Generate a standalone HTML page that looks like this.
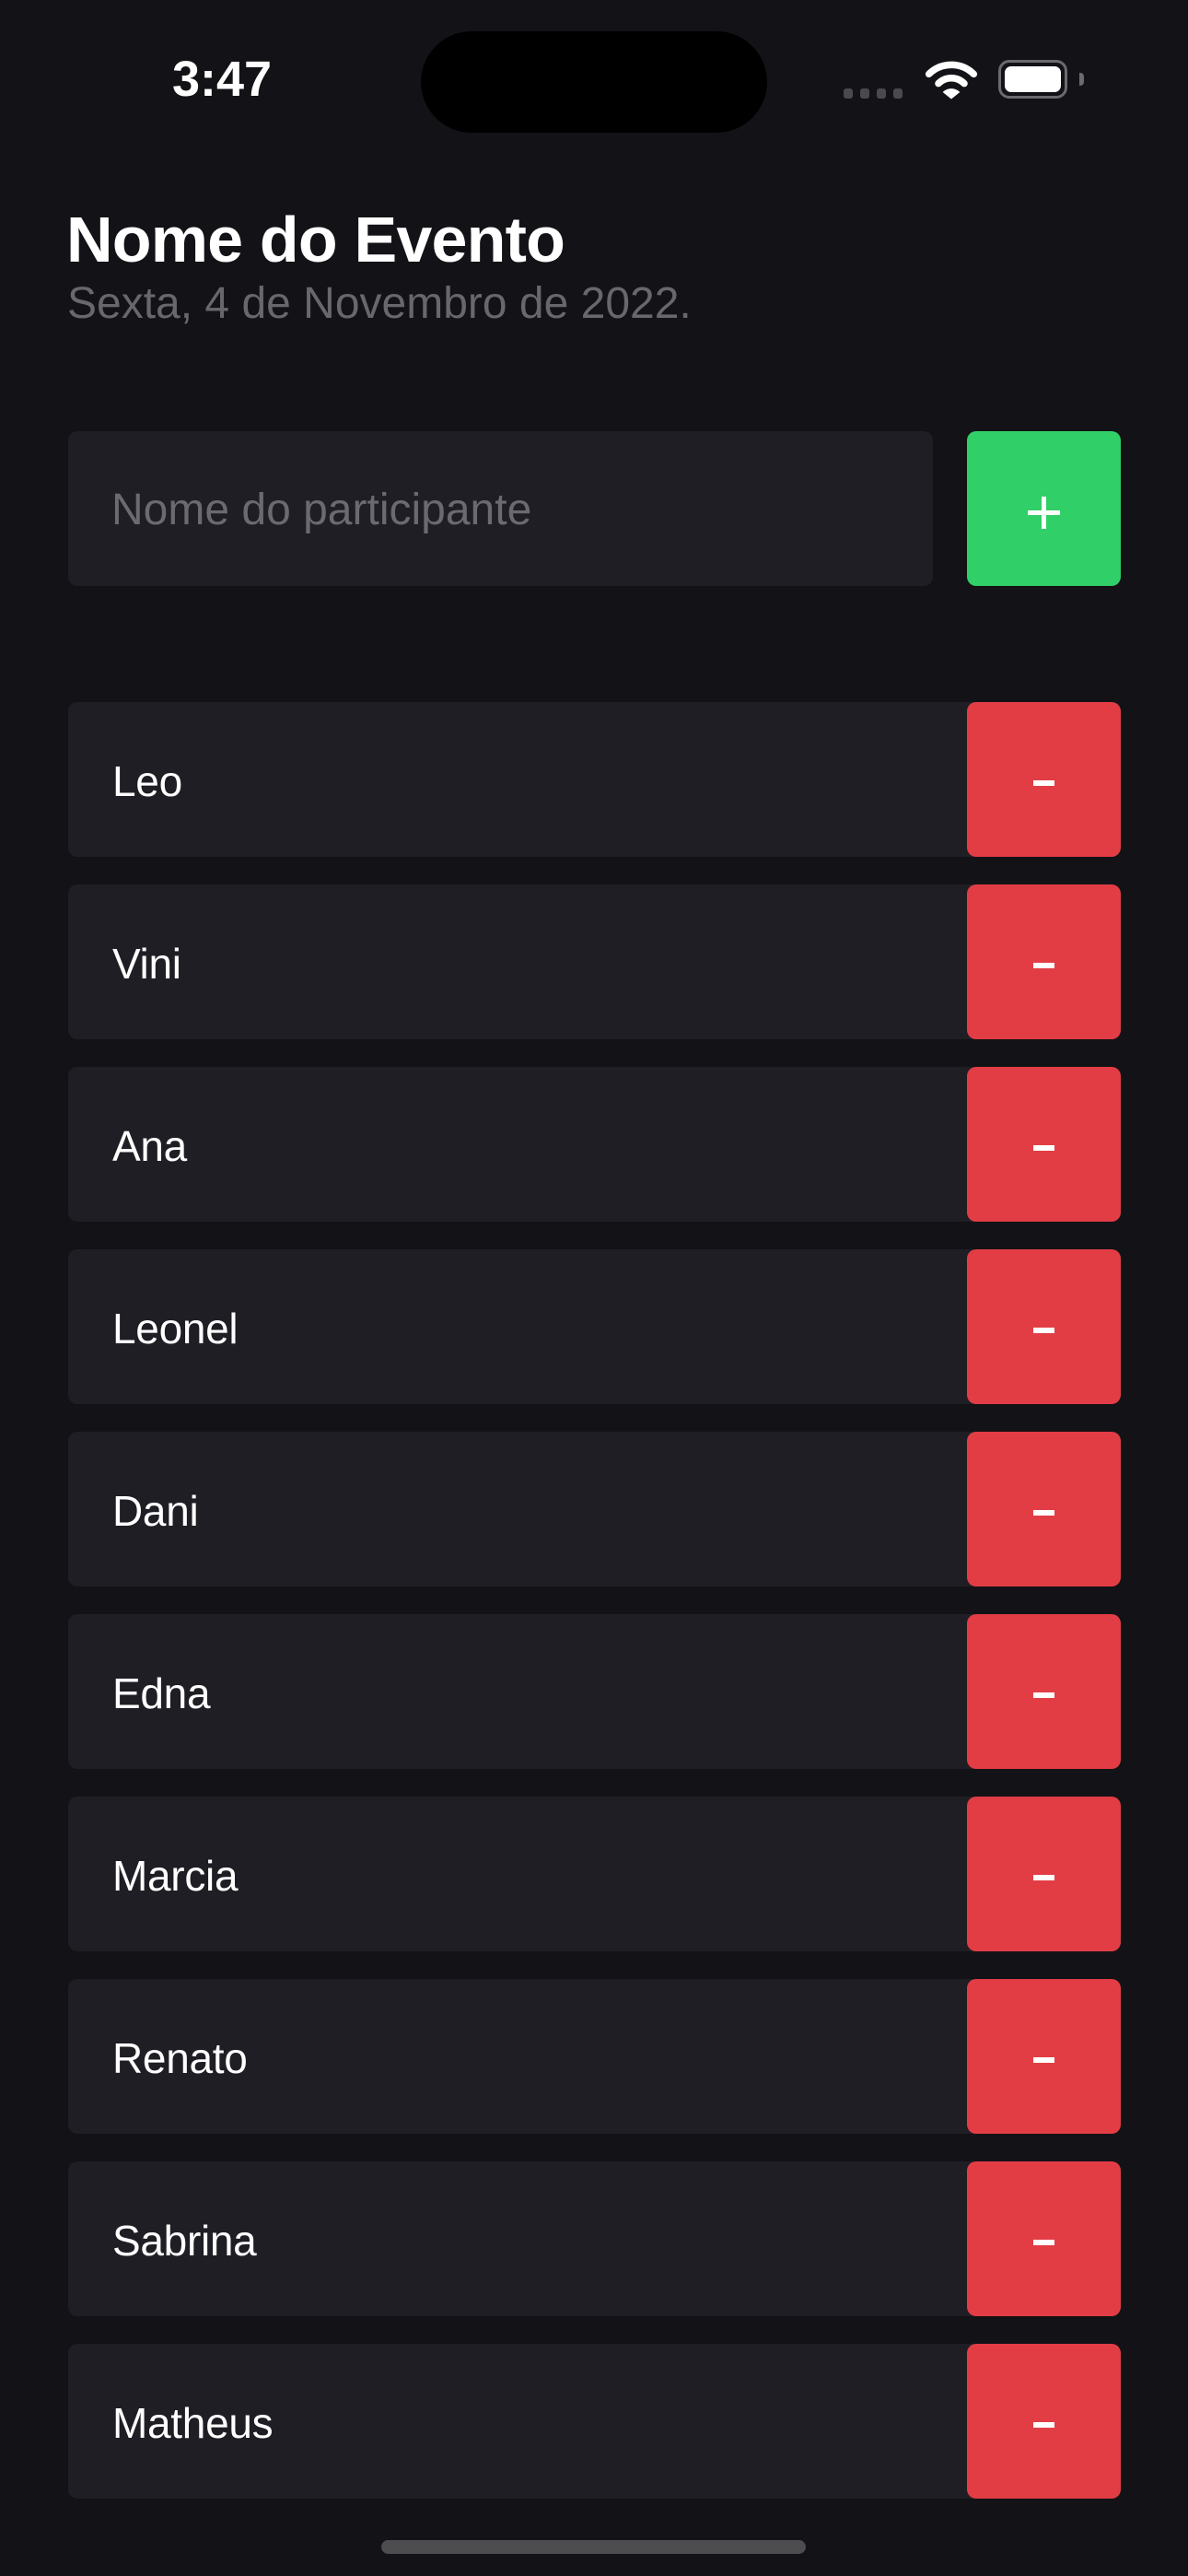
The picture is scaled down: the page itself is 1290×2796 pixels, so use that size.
<!DOCTYPE html>
<html><head><meta charset="utf-8"><style>
body{margin:0;width:1290px;height:2796px;background:#131216;position:relative;overflow:hidden;font-family:"Liberation Sans",sans-serif;}
.a{position:absolute}
.row{position:absolute;left:74px;width:1143px;height:168px;background:#1f1e24;border-radius:10px}
.row span{position:absolute;left:48px;top:2px;line-height:168px;font-size:46px;color:#fff;letter-spacing:-0.3px}
.btn{position:absolute;right:0;top:0;width:167px;height:168px;background:#e23d45;border-radius:10px}
.btn i{position:absolute;left:72px;top:85px;width:23px;height:6px;background:#fff}
</style></head><body>
<div class="a" style="left:0;width:482px;top:56px;text-align:center;font-size:54px;font-weight:bold;color:#fff;line-height:60px">3:47</div>
<div class="a" style="left:457px;top:34px;width:376px;height:110px;background:#000;border-radius:55px"></div>
<div class="a" style="left:916px;top:96px;width:10px;height:11px;background:#4a4a4e;border-radius:3px"></div>
<div class="a" style="left:934px;top:96px;width:10px;height:11px;background:#4a4a4e;border-radius:3px"></div>
<div class="a" style="left:952px;top:96px;width:10px;height:11px;background:#4a4a4e;border-radius:3px"></div>
<div class="a" style="left:970px;top:96px;width:10px;height:11px;background:#4a4a4e;border-radius:3px"></div>
<svg class="a" style="left:1004px;top:64px" width="58" height="44" viewBox="0 0 62 46">
<path d="M5 17 A37 37 0 0 1 57 17" stroke="#fff" stroke-width="8" fill="none" stroke-linecap="round"/>
<path d="M16 28 A21 21 0 0 1 46 28" stroke="#fff" stroke-width="8" fill="none" stroke-linecap="round"/>
<path d="M21 38 L31 46 L41 38 A14 14 0 0 0 21 38Z" fill="#fff"/></svg>
<div class="a" style="left:1084px;top:65px;width:69px;height:36px;border:3px solid #6b6b6f;border-radius:12px"></div>
<div class="a" style="left:1091px;top:72px;width:61px;height:28px;background:#fff;border-radius:7px"></div>
<div class="a" style="left:1172px;top:79px;width:5px;height:14px;background:#6b6b6f;border-radius:0 4px 4px 0"></div>
<div class="a" style="left:72px;top:220px;font-size:70px;font-weight:bold;color:#fff;letter-spacing:-0.8px">Nome do Evento</div>
<div class="a" style="left:73px;top:302px;font-size:48px;color:#68676c;letter-spacing:0px">Sexta, 4 de Novembro de 2022.</div>
<div class="a" style="left:74px;top:468px;width:939px;height:168px;background:#1f1e24;border-radius:10px"></div>
<div class="a" style="left:121px;top:470px;line-height:168px;font-size:48px;color:#6b6a70;letter-spacing:0px">Nome do participante</div>
<div class="a" style="left:1050px;top:468px;width:167px;height:168px;background:#31cf68;border-radius:10px">
<div class="a" style="left:66px;top:86px;width:35px;height:5px;background:#fff"></div>
<div class="a" style="left:81px;top:71px;width:5px;height:35px;background:#fff"></div></div>
<div class="row" style="top:762px"><span>Leo</span><div class="btn"><i></i></div></div>
<div class="row" style="top:960px"><span>Vini</span><div class="btn"><i></i></div></div>
<div class="row" style="top:1158px"><span>Ana</span><div class="btn"><i></i></div></div>
<div class="row" style="top:1356px"><span>Leonel</span><div class="btn"><i></i></div></div>
<div class="row" style="top:1554px"><span>Dani</span><div class="btn"><i></i></div></div>
<div class="row" style="top:1752px"><span>Edna</span><div class="btn"><i></i></div></div>
<div class="row" style="top:1950px"><span>Marcia</span><div class="btn"><i></i></div></div>
<div class="row" style="top:2148px"><span>Renato</span><div class="btn"><i></i></div></div>
<div class="row" style="top:2346px"><span>Sabrina</span><div class="btn"><i></i></div></div>
<div class="row" style="top:2544px"><span>Matheus</span><div class="btn"><i></i></div></div>
<div class="a" style="left:414px;top:2757px;width:461px;height:15px;background:#4d4d4f;border-radius:8px"></div>
</body></html>
